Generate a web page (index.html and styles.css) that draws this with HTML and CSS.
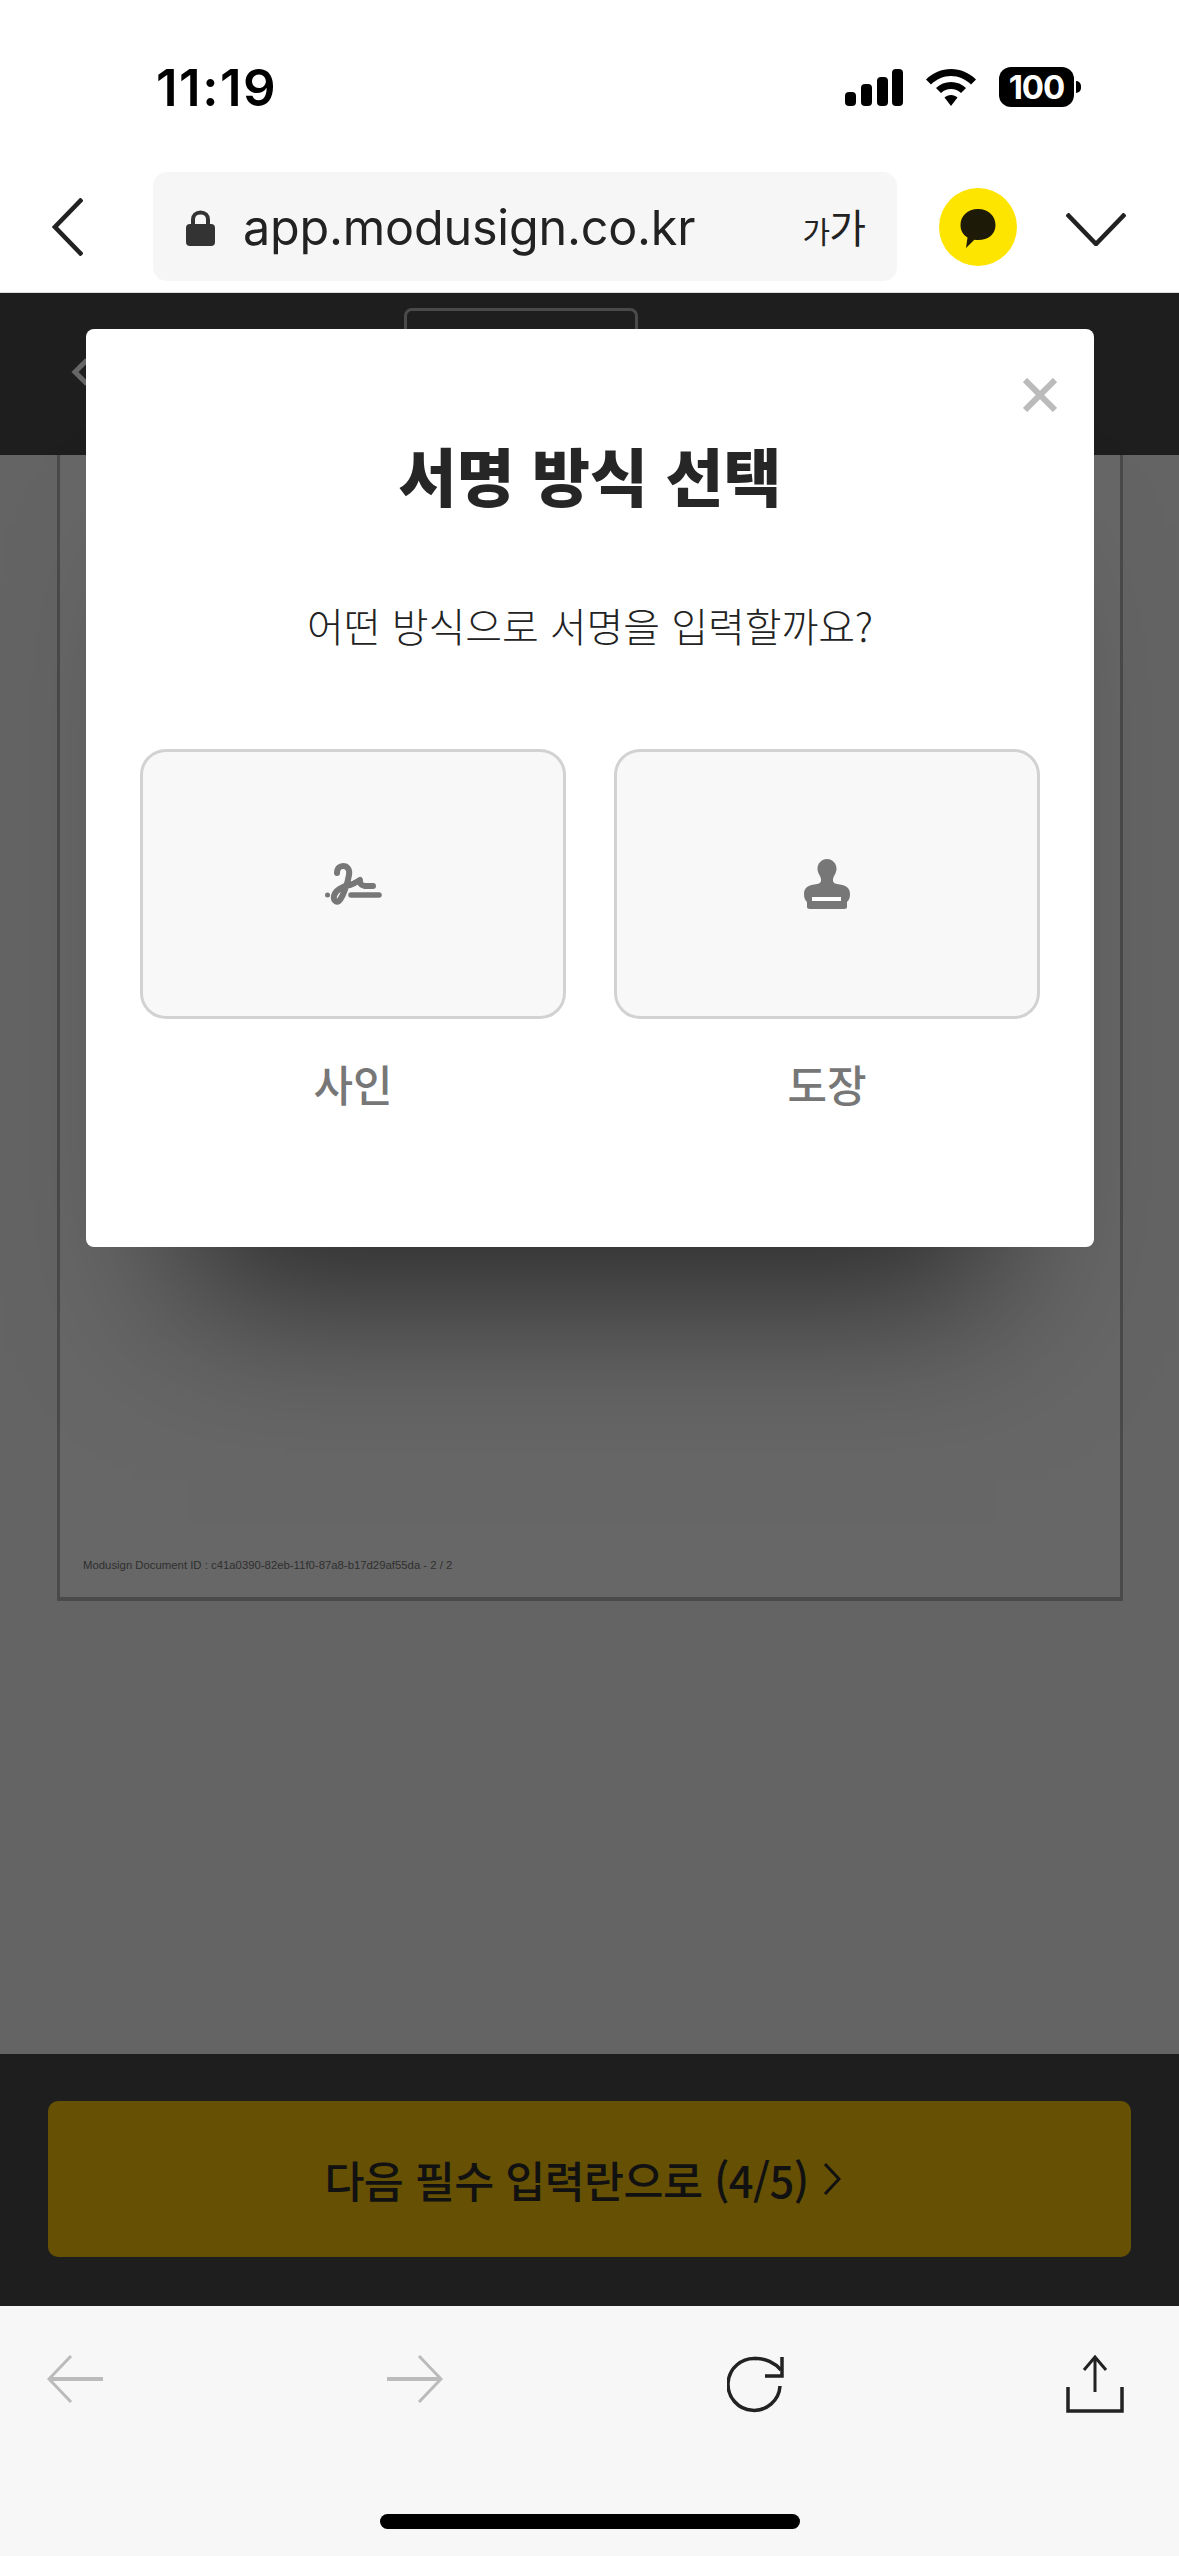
FILE: index.html
```html
<!DOCTYPE html>
<html lang="ko">
<head>
<meta charset="utf-8">
<title>서명 방식 선택</title>
<link rel="stylesheet" href="styles.css">
</head>
<body>
<div class="screen">
  <header class="status">
    <span class="time">11:19</span>
    <div class="status-icons">
      <svg class="signal" width="58" height="37" viewBox="0 0 58 37"><rect x="0" y="23" width="11" height="14" rx="4"/><rect x="16" y="15" width="11" height="22" rx="4"/><rect x="32" y="8" width="11" height="29" rx="4"/><rect x="47" y="0" width="11" height="37" rx="4"/></svg>
      <svg class="wifi" width="50" height="37" viewBox="0 0 50 37"><path d="M25 0C34.500 0 43 3.800 50 10.500L45 15.500C39.500 10.200 32.500 7 25 7S10.500 10.200 5 15.500L0 10.500C7 3.800 15.500 0 25 0Z"/><path d="M25 13C30.800 13 36 15.200 40 19L35 24C32.300 21.500 28.800 20 25 20S17.700 21.500 15 24L10 19C14 15.200 19.200 13 25 13Z"/><path d="M25 26C27.500 26 29.800 27 31.500 28.500L25 37L18.500 28.500C20.200 27 22.500 26 25 26Z"/></svg>
      <div class="battery"><span class="battery-body">100</span><span class="battery-nub"></span></div>
    </div>
  </header>

  <nav class="address">
    <svg class="addr-back" width="31" height="58" viewBox="0 0 31 58"><path d="M30 1L3 29L30 57" fill="none" stroke="#222" stroke-width="4.500"/></svg>
    <div class="url-pill">
      <svg class="lock" width="29" height="36" viewBox="0 0 29 36"><path d="M7 16V9.500C7 5.500 10 2.500 14.500 2.500S22 5.500 22 9.500V16" fill="none" stroke="#333" stroke-width="4"/><rect x="0" y="14" width="29" height="22" rx="4" fill="#333"/></svg>
      <span class="url">app.modusign.co.kr</span>
      <span class="text-size"><small>가</small>가</span>
    </div>
    <div class="kakao">
      <svg width="40" height="42" viewBox="0 0 40 42"><path d="M20 1C30.500 1 37.500 8 37.500 17C37.500 26 30.500 32 20 32C18.700 32 17.500 31.900 16.300 31.700L8 40L9.500 29.500C4.500 26.500 2.500 22 2.500 17C2.500 8 9.500 1 20 1Z" fill="#1e1a08"/></svg>
    </div>
    <svg class="addr-down" width="60" height="33" viewBox="0 0 60 33"><path d="M1 1L30 31L59 1" fill="none" stroke="#222" stroke-width="4.500"/></svg>
  </nav>

  <main class="app">
    <div class="app-head">
      <svg class="head-back" width="26" height="30" viewBox="0 0 26 30"><path d="M16 3L4 15L16 27" fill="none" stroke="#666" stroke-width="5"/></svg>
      <div class="head-box"></div>
    </div>
    <div class="doc-area">
      <div class="doc-page">
        <p class="doc-id">Modusign Document ID : c41a0390-82eb-11f0-87a8-b17d29af55da - 2 / 2</p>
      </div>
    </div>
    <div class="app-foot">
      <button class="next-btn"><span>다음 필수 입력란으로 (4/5)</span>
        <svg width="18" height="32" viewBox="0 0 18 32"><path d="M2 1L16 16L2 31" fill="none" stroke="#111" stroke-width="3"/></svg>
      </button>
    </div>
  </main>

  <footer class="toolbar">
    <div class="tool-icons">
      <svg width="56" height="48" viewBox="0 0 56 48"><path d="M24 1L2 24L24 47" fill="none" stroke="#bbb" stroke-width="3"/><path d="M2 24H56" stroke="#bbb" stroke-width="4"/></svg>
      <svg width="56" height="48" viewBox="0 0 56 48"><path d="M32 1L54 24L32 47" fill="none" stroke="#bbb" stroke-width="3"/><path d="M0 24H54" stroke="#bbb" stroke-width="4"/></svg>
      <svg class="reload" width="58" height="58" viewBox="0 0 58 58"><path d="M53 31A26 26 0 1 1 29 3.500" fill="none" stroke="#222" stroke-width="3.500"/><path d="M28 3.500C38 3 48 8 54 15" fill="none" stroke="#222" stroke-width="3.500"/><path d="M55 2V21H38" fill="none" stroke="#222" stroke-width="3.500"/></svg>
      <svg class="share" width="58" height="58" viewBox="0 0 58 58"><path d="M29 2V37M18 15L29 2L40 15" fill="none" stroke="#222" stroke-width="3"/><path d="M2 32V56H56V32" fill="none" stroke="#222" stroke-width="3.500"/></svg>
    </div>
    <div class="home-bar"></div>
  </footer>

  <section class="modal">
    <svg class="close" width="34" height="34" viewBox="0 0 34 34"><path d="M2 2L32 32M32 2L2 32" stroke="#bbb" stroke-width="6"/></svg>
    <h1 class="modal-title">서명 방식 선택</h1>
    <p class="modal-sub">어떤 방식으로 서명을 입력할까요?</p>
    <div class="choices">
      <div class="choice">
        <div class="choice-card">
          <svg width="60" height="60" viewBox="0 0 60 60"><circle cx="4.500" cy="41" r="2.500" fill="#777"/><path d="M14 19C14 14 17 12 20 12C24 12 27 15 26 21C25 28 20 43 16 47C13 49 10 46 11 42C12 37 19 32 27 31C31 30 35 27 37 26C37 29 37 31 42 32L50 32" fill="none" stroke="#777" stroke-width="6" stroke-linecap="round" stroke-linejoin="round"/><path d="M28 41H56" stroke="#777" stroke-width="5.500" stroke-linecap="round"/></svg>
        </div>
        <span class="choice-label">사인</span>
      </div>
      <div class="choice">
        <div class="choice-card">
          <svg width="60" height="60" viewBox="0 0 60 60"><path d="M30 5C24.500 5 20.500 9.500 20.500 14.500C20.500 19 23 21 24 25C24.500 28 23 29.500 20 30C12 31 7 33 7 40C7 44 8 46 10 48V53C10 54 11 55 13 55H47C49 55 50 54 50 53V48C52 46 53 44 53 40C53 33 48 31 40 30C37 29.500 35.500 28 36 25C37 21 39.500 19 39.500 14.500C39.500 9.500 35.500 5 30 5Z" fill="#777"/><rect x="15" y="43" width="29" height="4" fill="#fff"/></svg>
        </div>
        <span class="choice-label">도장</span>
      </div>
    </div>
  </section>
</div>
</body>
</html>
```

FILE: styles.css
```css
* { box-sizing: border-box; }
html, body { margin: 0; padding: 0; background: #fff; }
body { font-family: "Inter", "Noto Sans CJK KR", sans-serif; color: #222; }

.screen { position: relative; width: 1179px; height: 2556px; display: flex; flex-direction: column; overflow: hidden; }

/* status bar */
.status { height: 172px; flex: none; display: flex; justify-content: space-between; align-items: flex-start; padding: 60px 98px 0 156px; }
.time { font-size: 51px; line-height: 56px; font-weight: 600; color: #000; letter-spacing: 1.500px; }
.status-icons { display: flex; align-items: center; gap: 23px; padding-top: 7px; }
.battery { display: flex; align-items: center; gap: 2px; }
.battery-body { width: 75px; height: 40px; background: #000; color: #fff; border-radius: 12px; font-size: 33px; line-height: 40px; font-weight: 700; text-align: center; letter-spacing: -1px; }
.battery-nub { width: 5px; height: 12px; background: #000; border-radius: 0 6px 6px 0; }

/* address bar */
.address { height: 121px; flex: none; display: flex; align-items: flex-start; border-bottom: 1px solid #ddd; padding-left: 52px; }
.addr-back { margin-top: 26px; flex: none; }
.url-pill { width: 744px; height: 109px; margin-left: 70px; background: #f6f6f6; border-radius: 14px; display: flex; align-items: center; padding: 2px 32px 0 33px; flex: none; }
.lock { flex: none; margin-right: 28px; }
.url { font-size: 48.500px; line-height: 60px; color: #222; flex: 1; letter-spacing: -.2px; }
.text-size { font-family: "Noto Sans CJK KR", sans-serif; font-size: 40px; line-height: 50px; color: #222; font-weight: 400; letter-spacing: -1px; }
.text-size small { font-size: 30px; }
.kakao { width: 78px; height: 78px; border-radius: 50%; background: #fee500; margin: 16px 0 0 42px; display: flex; align-items: center; justify-content: center; padding-top: 4px; flex: none; }
.addr-down { margin: 41px 0 0 49px; flex: none; }

/* page behind dialog */
.app { flex: 1; display: flex; flex-direction: column; background: #646464; min-height: 0; }
.app-head { height: 162px; flex: none; background: #1e1e1e; display: flex; align-items: flex-start; padding: 64px 0 0 71px; }
.head-back { flex: none; }
.head-box { width: 234px; height: 60px; margin: -49px 0 0 307px; border: 3px solid #4a4a4a; border-radius: 8px; }
.doc-area { flex: 1; min-height: 0; padding: 0 56px 0 57px; }
.doc-page { height: 1146px; background: #676767; border: 3px solid #4a4a4a; border-top: 0; border-bottom-width: 4px; display: flex; flex-direction: column; justify-content: flex-end; padding: 0 0 25px 23px; }
.doc-id { margin: 0; font-family: "Liberation Sans", sans-serif; font-size: 11.350px; line-height: 14px; color: #2f2f2f; white-space: nowrap; }
.app-foot { height: 252px; flex: none; background: #1e1e1e; padding: 47px 48px 0; }
.next-btn { width: 100%; height: 156px; background: #655003; border: 0; border-radius: 10px; display: flex; align-items: center; justify-content: center; gap: 14px; padding: 0 14px 0 0; font-family: "Noto Sans CJK KR", sans-serif; font-size: 43.500px; font-weight: 500; color: #111; }
.next-btn span { letter-spacing: -.6px; }

/* browser toolbar */
.toolbar { height: 250px; flex: none; background: #f7f7f7; display: flex; flex-direction: column; padding-top: 44px; }
.tool-icons { height: 164px; display: flex; align-items: flex-start; gap: 284px; padding: 5px 0 0 47px; }
.share { margin-left: -3px; }
.home-bar { width: 420px; height: 15px; background: #000; border-radius: 8px; margin-left: 380px; flex: none; }

/* dialog */
.modal { position: absolute; left: 86px; top: 329px; width: 1008px; height: 918px; background: #fff; border-radius: 8px; padding: 104px 54px 0; display: flex; flex-direction: column; align-items: center; font-family: "Noto Sans CJK KR", sans-serif; box-shadow: 0 150px 150px -100px rgba(0,0,0,.6); }
.close { position: absolute; top: 49px; right: 37px; }
.modal-title { margin: 0; font-size: 63px; line-height: 82px; font-weight: 800; color: #262626; }
.modal-sub { margin: 83px 0 0; font-size: 40px; line-height: 54px; font-weight: 300; color: #222; letter-spacing: -.05px; }
.choices { margin-top: 97px; width: 100%; display: flex; justify-content: space-between; }
.choice { width: 426px; display: flex; flex-direction: column; align-items: center; }
.choice-card { width: 100%; height: 270px; background: #f8f8f8; border: 3px solid #d2d2d2; border-radius: 26px; display: flex; align-items: center; justify-content: center; }
.choice-label { margin-top: 35px; font-size: 43px; line-height: 58px; font-weight: 500; color: #777; }
```
